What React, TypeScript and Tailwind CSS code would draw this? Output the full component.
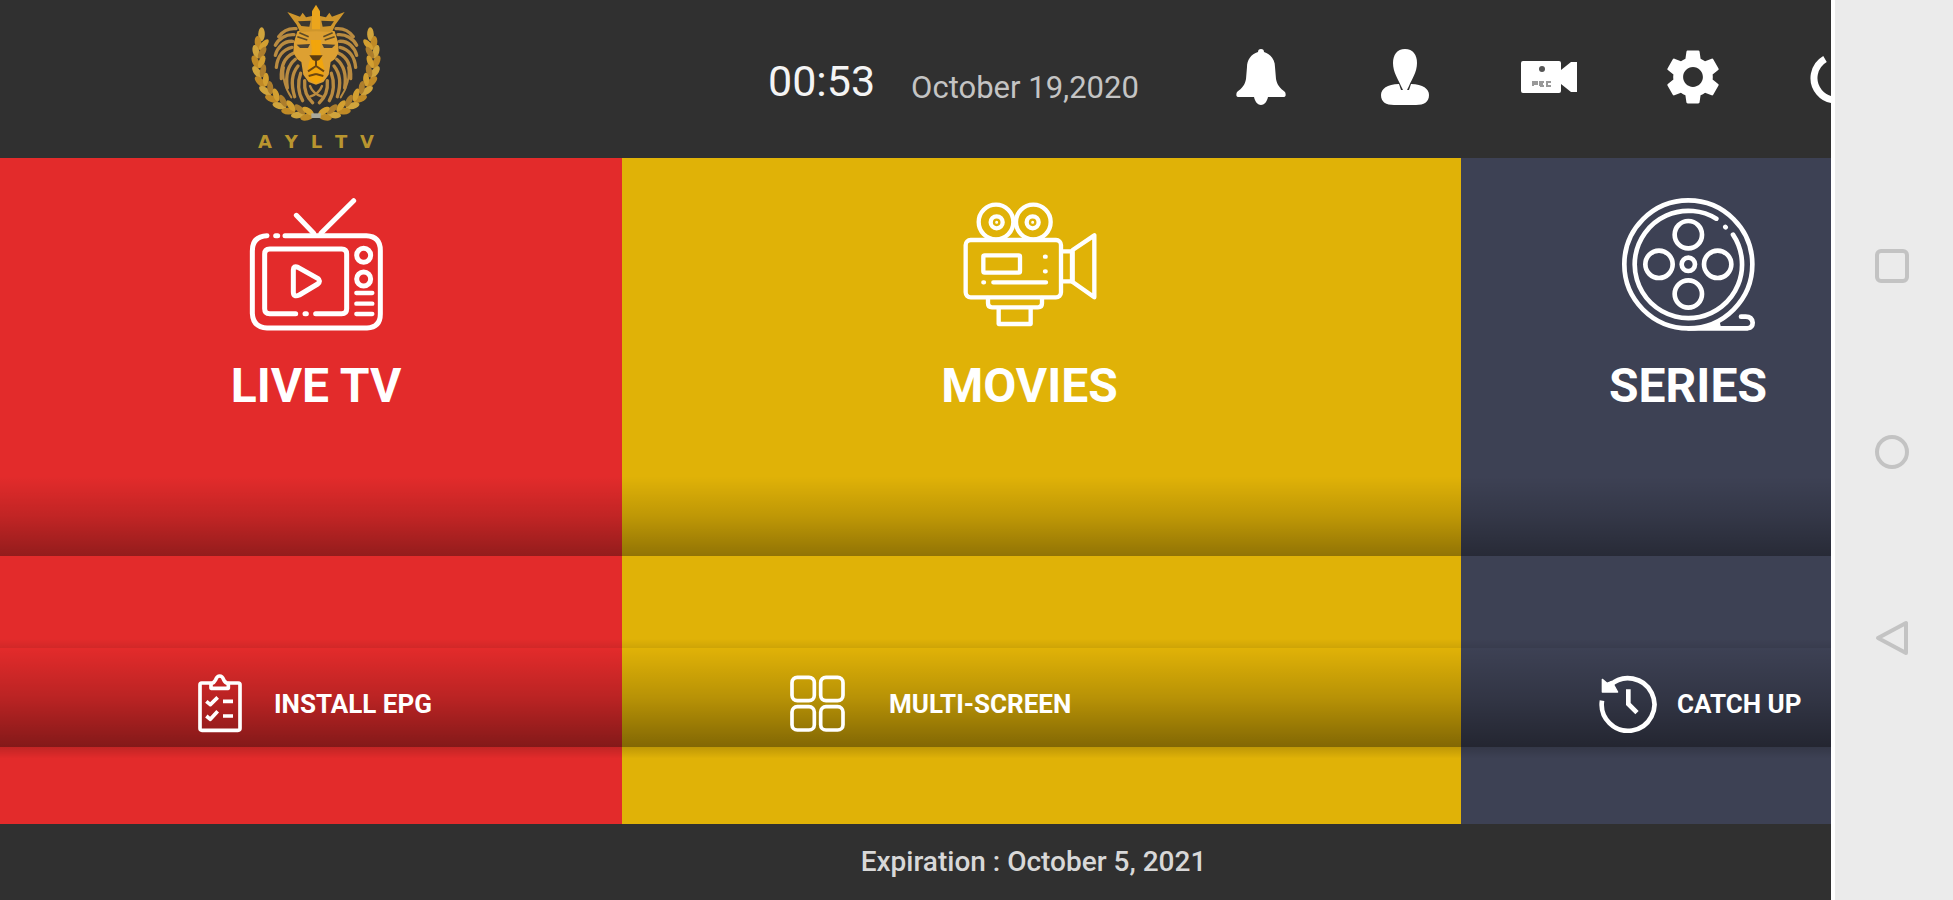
import React from "react"
import { MdSettings } from "react-icons/md"

const LEAF_ANGLES = [206, 197, 188, 178, 168, 158, 148, 138, 128, 118, 108, 99]

const Laurel = () => (
  <g>
    {LEAF_ANGLES.map((deg, i) => {
      const rad = (deg * Math.PI) / 180
      const x = 262 + 172 * Math.cos(rad)
      const y = 176 + 166 * Math.sin(rad)
      const tilt = deg + 90
      return (
        <g key={deg} transform={`translate(${x} ${y}) rotate(${tilt})`}>
          <ellipse
            cx="2"
            cy="-9"
            rx="21"
            ry="10"
            transform="rotate(-24)"
            fill={i % 2 ? "#c08a26" : "#d0a43c"}
          />
          {i > 0 && (
            <ellipse
              cx="2"
              cy="9"
              rx="20"
              ry="9"
              transform="rotate(24)"
              fill={i % 2 ? "#d39f30" : "#ad7e2c"}
            />
          )}
        </g>
      )
    })}
  </g>
)

const LionHalf = () => (
  <g>
    <Laurel />
    <g fill="none" stroke="#b98b40" strokeWidth="10" strokeLinecap="round">
      <path d="M202 84C182 82 162 92 150 108" />
      <path d="M196 102C172 100 150 114 140 134" />
      <path d="M192 122C164 120 146 142 140 164" />
      <path d="M190 140C162 146 146 170 143 200" />
      <path d="M194 158C168 170 156 196 158 234" />
      <path d="M200 176C178 194 170 222 176 262" />
      <path d="M208 196C190 218 186 250 198 288" />
      <path d="M216 218C206 244 208 276 222 300" />
      <path d="M228 240C226 268 236 292 252 306" />
      <path d="M166 200C160 226 168 262 188 290" strokeWidth="6" />
      <path d="M244 256C250 272 262 282 280 288" strokeWidth="7" />
    </g>
    <path
      d="M262 80L236 84L206 92L196 124L194 156L206 176L218 184L224 222L240 244L262 252Z"
      fill="#dda032"
    />
    <path d="M262 118L246 118L250 150L238 200L240 236L262 250Z" fill="#f2a50c" />
    <path d="M204 132L244 130L238 142L214 142Z" fill="#4a4234" />
    <path d="M212 96L240 108M206 108L236 118" stroke="#5e4b26" strokeWidth="5" />
    <path d="M242 164L262 164L262 182L252 178Z" fill="#5b3d12" />
    <path
      d="M262 180V196L238 212M262 196M240 226L262 220"
      fill="none"
      stroke="#6d4710"
      strokeWidth="6"
    />
    <path
      d="M176 34L214 48L222 36L232 50L250 46L262 20V92L214 94L204 72Z"
      fill="#cf962c"
    />
    <path d="M208 62L246 60L242 78L218 76Z" fill="#3a372f" />
  </g>
)

const Logo = () => (
  <div className="flex flex-col items-center">
    <svg className="h-[120px] w-[132px]" viewBox="64 10 396 360" aria-hidden="true">
      <LionHalf />
      <g transform="translate(524 0) scale(-1 1)">
        <LionHalf />
      </g>
      <path d="M262 12L274 32V86H250V32Z" fill="#eba51d" />
      <path d="M248 345H276" stroke="#a9a99c" strokeWidth="14" />
    </svg>
    <div className="mt-2 flex w-[116px] justify-between font-['DejaVu_Sans'] text-[18px] font-bold leading-5 text-[#b8952f]">
      {["A", "Y", "L", "T", "V"].map((letter) => (
        <span key={letter}>{letter}</span>
      ))}
    </div>
  </div>
)

const BellIcon = () => (
  <svg className="h-14 w-[50px]" viewBox="0 0 50 56" fill="currentColor" aria-hidden="true">
    <path d="M25 0C27 0 28 1 28 3C35 5 39 11 39 18L40 30C41 36 44 39 49 43C50 45 50 48 48 48H32C31 53 28 56 25 56S19 53 18 48H2C0 48 0 45 1 43C6 39 9 36 10 30L11 18C11 11 15 5 22 3C22 1 23 0 25 0Z" />
  </svg>
)

const UserIcon = () => (
  <svg className="h-14 w-12" viewBox="0 0 48 56" fill="currentColor" aria-hidden="true">
    <path d="M24 0C32 0 36 6 36 14C36 23 31 30 28 37L26 41H22L20 37C17 30 12 23 12 14C12 6 16 0 24 0Z" />
    <path d="M18 35L20 41H28L30 35C42 35 48 40 48 46C48 53 43 56 35 56H13C5 56 0 53 0 46C0 40 6 35 18 35Z" />
  </svg>
)

const RecordIcon = () => (
  <svg className="h-8 w-14" viewBox="0 0 56 32" aria-hidden="true">
    <path
      d="M2 0H38Q40 0 40 2V9L50 1H56V31H50L40 23V30Q40 32 38 32H2Q0 32 0 30V2Q0 0 2 0Z"
      fill="currentColor"
    />
    <circle cx="21" cy="8" r="3" fill="#555" />
    <path
      d="M12 25V21H16V23H12M19 25V21H23M19 23H22M19 25H23M30 21H26V25H30"
      fill="none"
      stroke="#999"
      strokeWidth="2"
    />
  </svg>
)

const PowerIcon = () => (
  <svg className="size-[54px]" viewBox="0 0 54 54" fill="none" stroke="currentColor" strokeWidth="7" aria-hidden="true">
    <path d="M15 9A22 22 0 1 0 37 9M26 2V26" />
  </svg>
)

const TvIcon = () => (
  <svg className="size-[134px]" viewBox="86 36 402 402" fill="none" stroke="currentColor" strokeWidth="15" strokeLinecap="round" strokeLinejoin="round" aria-hidden="true">
    <path d="M228 88L280 142M400 44L302 142" />
    <path d="M140 149Q96 151 96 195V382Q98 424 140 426H440Q480 424 480 384V193Q480 151 438 149H194" />
    <path d="M166 149H172" />
    <path d="M226 383H148Q133 383 133 368V204Q133 189 148 189H364Q379 189 379 204V368Q379 383 364 383H286" />
    <path d="M254 383H258" />
    <path d="M219 252Q219 238 233 244L292 277Q303 285 292 294L237 327Q219 335 219 318Z" />
    <circle cx="430" cy="208" r="21" />
    <circle cx="430" cy="279" r="21" />
    <path d="M408 321H456M408 353H456M408 384H456" strokeWidth="13" />
  </svg>
)

const MovieIcon = () => (
  <svg className="size-[134px]" viewBox="125 36 402 402" fill="none" stroke="currentColor" strokeWidth="13" strokeLinecap="round" strokeLinejoin="round" aria-hidden="true">
    <circle cx="224" cy="108" r="52" />
    <circle cx="336" cy="108" r="52" />
    <circle cx="226" cy="109" r="18" />
    <circle cx="334" cy="109" r="18" />
    <circle cx="226" cy="109" r="2" strokeWidth="5" />
    <circle cx="334" cy="109" r="2" strokeWidth="5" />
    <rect x="133" y="162" width="286" height="172" rx="15" />
    <rect x="186" y="208" width="110" height="52" rx="4" />
    <path d="M186 289H188M216 289H374M371 212H373M371 256H373" />
    <path d="M421 196H452V286H421" />
    <path d="M454 192L519 148V334L454 288Z" />
    <path d="M200 336V352Q200 364 212 364H350Q362 364 362 352V336" />
    <path d="M232 368V414H328V368" />
  </svg>
)

const ReelIcon = () => (
  <svg className="size-[134px]" viewBox="94 36 402 402" fill="none" stroke="currentColor" strokeWidth="14" strokeLinecap="round" strokeLinejoin="round" aria-hidden="true">
    <circle cx="296" cy="235" r="192" />
    <path d="M296 427H474Q489 424 489 410Q487 392 468 392H454" />
    <path d="M340 424L388 408L392 424Z" fill="currentColor" strokeWidth="4" />
    <path d="M380 98A161 161 0 1 0 430 146M407 123L408 124" />
    <circle cx="296" cy="146" r="41" />
    <circle cx="208" cy="235" r="41" />
    <circle cx="384" cy="235" r="41" />
    <circle cx="296" cy="324" r="41" />
    <circle cx="296" cy="235" r="20" />
  </svg>
)

const EpgIcon = () => (
  <svg className="h-[59px] w-11" viewBox="55 102 132 177" fill="none" stroke="currentColor" strokeWidth="11" strokeLinejoin="round" aria-hidden="true">
    <path d="M96 129H66Q61 129 61 134V265Q61 271 67 271H175Q181 271 181 265V134Q181 129 176 129H144" />
    <path d="M94 145V131Q104 128 108 119Q112 108 120 108T132 119Q136 128 146 131V145Z" />
    <path d="M80 184L92 194L114 172M80 228L92 238L114 214M130 184H160M130 228H160" />
  </svg>
)

const GridIcon = () => (
  <svg className="h-[57px] w-[55px]" viewBox="88 104 165 171" fill="none" stroke="currentColor" strokeWidth="11" aria-hidden="true">
    <rect x="94" y="111" width="67" height="70" rx="16" />
    <rect x="180" y="111" width="67" height="70" rx="16" />
    <rect x="94" y="199" width="67" height="70" rx="16" />
    <rect x="180" y="199" width="67" height="70" rx="16" />
  </svg>
)

const HistoryIcon = () => (
  <svg className="size-[58px]" viewBox="508 643 174 174" fill="none" stroke="currentColor" strokeWidth="14" aria-hidden="true">
    <path d="M517 720A79 79 0 1 0 541 674" />
    <path d="M518 656L532 668L546 662L564 694H518Z" fill="currentColor" strokeWidth="4" strokeLinejoin="round" />
    <path d="M596 686V730L622 756" />
  </svg>
)

interface ColumnProps {
  title: string
  action: string
  icon: React.ReactNode
  actionIcon: React.ReactNode
  color: string
  tilePadding: string
  actionPadding: string
}

const columns: ColumnProps[] = [
  {
    title: "LIVE TV",
    action: "INSTALL EPG",
    icon: <TvIcon />,
    actionIcon: <EpgIcon />,
    color: "bg-[#e32b2b]",
    tilePadding: "pl-2.5",
    actionPadding: "pl-[198px] gap-8"
  },
  {
    title: "MOVIES",
    action: "MULTI-SCREEN",
    icon: <MovieIcon />,
    actionIcon: <GridIcon />,
    color: "bg-[#e0b207]",
    tilePadding: "pr-6",
    actionPadding: "pl-[168px] gap-11"
  },
  {
    title: "SERIES",
    action: "CATCH UP",
    icon: <ReelIcon />,
    actionIcon: <HistoryIcon />,
    color: "bg-[#3d4154]",
    tilePadding: "pl-[84px]",
    actionPadding: "pl-[138px] gap-5"
  }
]

const Column: React.FC<ColumnProps> = ({
  title,
  action,
  icon,
  actionIcon,
  color,
  tilePadding,
  actionPadding
}) => (
  <section
    className={`grid min-w-0 grid-rows-[398fr_92fr_99fr_77fr] overflow-hidden ${color}`}
  >
    <button
      className={`flex flex-col items-center bg-linear-to-b from-transparent from-80% via-black/15 via-90% to-black/35 pt-10 ${tilePadding}`}
    >
      {icon}
      <span className="mt-[30px] text-5xl leading-none font-bold">{title}</span>
    </button>
    <div className="bg-linear-to-b from-transparent from-90% to-black/8" />
    <button
      className={`flex items-center bg-linear-to-b from-transparent via-black/18 to-black/42 pt-3 whitespace-nowrap ${actionPadding}`}
    >
      {actionIcon}
      <span className="text-[26px] leading-none font-bold">{action}</span>
    </button>
    <div className="bg-linear-to-b from-black/15 to-transparent to-15%" />
  </section>
)

const headerActions = [
  { label: "Notifications", icon: <BellIcon /> },
  { label: "Account", icon: <UserIcon /> },
  { label: "Recordings", icon: <RecordIcon /> },
  { label: "Settings", icon: <MdSettings className="size-[66px]" /> },
  { label: "Power", icon: <PowerIcon /> }
]

const App = () => {
  return (
    <div className="flex h-screen overflow-hidden bg-[#303030] font-[Roboto,sans-serif] text-white">
      <main className="flex min-w-0 flex-1 flex-col">
        <header className="grid h-[158px] grid-cols-[622fr_1209fr] overflow-hidden">
          <div className="flex justify-center pt-1 pl-2.5">
            <Logo />
          </div>
          <div className="flex min-w-0 items-center overflow-hidden pl-[146px] whitespace-nowrap">
            <div className="flex items-end gap-9 pt-1 text-[#f4f4f4]">
              <time className="text-[43px] leading-none">00:53</time>
              <span className="text-[31px] leading-none text-[#c4c4c4]">
                October 19,2020
              </span>
            </div>
            <nav className="ml-[50px] flex items-center pb-1">
              {headerActions.map(({ label, icon }) => (
                <button
                  key={label}
                  aria-label={label}
                  className="flex w-36 shrink-0 items-center justify-center"
                >
                  {icon}
                </button>
              ))}
            </nav>
          </div>
        </header>

        <div className="grid min-h-0 flex-1 grid-cols-[622fr_839fr_370fr]">
          {columns.map((column) => (
            <Column key={column.title} {...column} />
          ))}
        </div>

        <footer className="grid h-[76px] grid-cols-[622fr_839fr_370fr] items-center">
          <p className="col-start-2 pr-4 text-center text-[28px] leading-none font-medium text-[#d8d8d8]">
            Expiration : October 5, 2021
          </p>
        </footer>
      </main>

      <aside className="flex w-[122px] shrink-0 flex-col items-center justify-center gap-[150px] border-l-4 border-white bg-[#ebebeb] pt-1 pr-1 text-[#c3c3c3]">
        <button aria-label="Recent apps">
          <svg className="size-9" viewBox="0 0 36 36" fill="none" stroke="currentColor" strokeWidth="4" aria-hidden="true">
            <rect x="3" y="3" width="30" height="30" rx="4" />
          </svg>
        </button>
        <button aria-label="Home">
          <svg className="size-9" viewBox="0 0 36 36" fill="none" stroke="currentColor" strokeWidth="4" aria-hidden="true">
            <circle cx="18" cy="18" r="15" />
          </svg>
        </button>
        <button aria-label="Back">
          <svg className="size-9" viewBox="0 0 36 36" fill="none" stroke="currentColor" strokeWidth="4" strokeLinejoin="round" aria-hidden="true">
            <path d="M4 18L32 3V33Z" />
          </svg>
        </button>
      </aside>
    </div>
  )
}

export default App
